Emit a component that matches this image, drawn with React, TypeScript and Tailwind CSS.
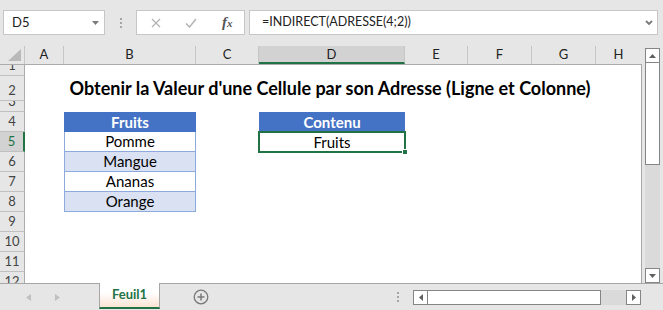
import React from 'react';

const cols = [
  { label: 'A', w: 'w-[39px]' },
  { label: 'B', w: 'w-[132px]' },
  { label: 'C', w: 'w-[63px]' },
  { label: 'D', w: 'w-[146px]', active: true },
  { label: 'E', w: 'w-[63px]' },
  { label: 'F', w: 'w-[64px]' },
  { label: 'G', w: 'w-[64px]' },
  { label: 'H', w: 'w-[45px]' },
];

const rows = [
  { n: 1, h: 'h-[11px]' },
  { n: 2, h: 'h-[25px]' },
  { n: 3, h: 'h-[11px]' },
  { n: 4, h: 'h-[20px]' },
  { n: 5, h: 'h-[20px]' },
  { n: 6, h: 'h-[20px]' },
  { n: 7, h: 'h-[20px]' },
  { n: 8, h: 'h-[20px]' },
  { n: 9, h: 'h-[20px]' },
  { n: 10, h: 'h-[20px]' },
  { n: 11, h: 'h-[20px]' },
  { n: 12, h: 'h-[20px]' },
];

const fruits = ['Pomme', 'Mangue', 'Ananas', 'Orange'];

function TriDown({ className = '' }: { className?: string }) {
  return (
    <svg width="7" height="4" viewBox="0 0 7 4" className={className}>
      <path d="M0 0h7L3.5 4z" fill="#7a7a7a" />
    </svg>
  );
}

function FormulaBar() {
  return (
    <div className="h-[46px] flex items-start pt-[10px] pl-[3px] shrink-0">
      <div className="w-[102px] h-[25px] bg-white border border-[#c6c6c6] flex items-center justify-between pl-[8px] pr-[5px]">
        <span className="text-[13px] text-[#222]">D5</span>
        <TriDown />
      </div>
      <div className="w-[31px] h-[25px] flex flex-col items-center justify-center gap-[2px]">
        <span className="w-[2px] h-[2px] bg-[#a6a6a6]" />
        <span className="w-[2px] h-[2px] bg-[#a6a6a6]" />
        <span className="w-[2px] h-[2px] bg-[#a6a6a6]" />
      </div>
      <div className="w-[109px] h-[25px] bg-white border border-[#c6c6c6] flex items-center">
        <svg width="10" height="10" viewBox="0 0 10 10" className="ml-[14px]">
          <path d="M1 1l8 8M9 1l-8 8" stroke="#b4b4b4" strokeWidth="1.3" />
        </svg>
        <svg width="12" height="10" viewBox="0 0 12 10" className="ml-[24px]">
          <path d="M1 5.5l3.5 3.5L11 1" stroke="#b4b4b4" strokeWidth="1.5" fill="none" />
        </svg>
        <span className="ml-[25px] font-['Liberation_Serif',serif] italic font-bold text-[15px] text-[#555] leading-none">
          f<span className="text-[11px]">x</span>
        </span>
      </div>
      <div className="ml-[4px] w-[409px] h-[25px] bg-white border border-[#c6c6c6] flex items-center justify-between pl-[12px] pr-[4px]">
        <span className="text-[12.5px] text-[#222]">=INDIRECT(ADRESSE(4;2))</span>
        <svg width="8" height="6" viewBox="0 0 8 6">
          <path d="M1 1l3 3 3-3" stroke="#7a7a7a" strokeWidth="1.8" fill="none" />
        </svg>
      </div>
    </div>
  );
}

function RowContent({ n }: { n: number }) {
  if (n === 2) {
    return (
      <div className="ml-[39px] w-[532px] h-full flex items-end justify-center pb-[4px]">
        <span className="font-bold text-[18px] leading-none text-black whitespace-nowrap">
          Obtenir la Valeur d'une Cellule par son Adresse (Ligne et Colonne)
        </span>
      </div>
    );
  }
  if (n === 4) {
    return (
      <div className="flex h-full">
        <div className="ml-[39px] w-[132px] h-full bg-[#4472c4] text-white font-bold flex items-center justify-center text-[15px]">Fruits</div>
        <div className="ml-[63px] w-[146px] h-full bg-[#4472c4] text-white font-bold flex items-center justify-center text-[15px]">Contenu</div>
      </div>
    );
  }
  if (n >= 5 && n <= 8) {
    const banded = n % 2 === 0;
    return (
      <div className="flex h-full">
        <div className={`ml-[39px] w-[132px] h-full border-x border-b border-[#8ea9db] flex items-center justify-center text-[15px] text-black ${banded ? 'bg-[#d9e1f2]' : 'bg-white'}`}>
          {fruits[n - 5]}
        </div>
        {n === 5 && (
          <div className="ml-[62px] w-[148px] h-[22px] -mt-px relative border-2 border-[#217346] flex items-center justify-center text-[15px] text-black">
            Fruits
            <span className="absolute -right-[4px] -bottom-[4px] w-[6px] h-[6px] bg-[#217346] border border-white" />
          </div>
        )}
      </div>
    );
  }
  return null;
}

function VScroll() {
  return (
    <div className="w-[15px] ml-[3px] pt-[2px] flex flex-col">
      <div className="h-[15px] bg-white border border-[#858585] flex items-center justify-center">
        <svg width="7" height="4" viewBox="0 0 7 4"><path d="M0 4h7L3.5 0z" fill="#606060" /></svg>
      </div>
      <div className="h-[102px] bg-white border-x border-b border-[#858585]" />
      <div className="flex-1 bg-[#dadada]" />
      <div className="h-[15px] bg-white border border-[#858585] flex items-center justify-center">
        <svg width="7" height="4" viewBox="0 0 7 4"><path d="M0 0h7L3.5 4z" fill="#606060" /></svg>
      </div>
    </div>
  );
}

function Grid() {
  return (
    <div className="w-[642px] flex flex-col">
      <div className="h-[19px] flex shrink-0 border-b border-[#ababab]">
        <div className="w-[25px] h-full border-r border-[#c6c6c6] flex items-end justify-end pr-[3px] pb-[3px]">
          <svg width="13" height="12" viewBox="0 0 13 12"><path d="M13 0v12H0z" fill="#b9b9b9" /></svg>
        </div>
        {cols.map((c) => (
          <div
            key={c.label}
            className={`${c.w} h-full flex items-center justify-center text-[13px] ${c.label === 'H' ? '' : 'border-r border-[#c6c6c6]'} ${c.active ? 'bg-[#d2d2d2] border-b-2 border-b-[#217346] -mb-px text-[#1d1d1d]' : 'text-[#222]'}`}
          >
            <span className={c.active ? 'pt-[1px]' : ''}>{c.label}</span>
          </div>
        ))}
      </div>
      <div className="flex-1 overflow-hidden border-r border-[#a6a6a6] bg-white">
        {rows.map((r) => (
          <div key={r.n} className={`${r.h} flex`}>
            <div
              className={`w-[25px] shrink-0 h-full border-b border-[#c0c0c0] flex items-end justify-center overflow-hidden pb-[2px] text-[13px] leading-[15px] ${r.n === 5 ? 'bg-[#d2d2d2] border-r-2 border-r-[#217346] text-[#217346]' : 'bg-[#e6e6e6] border-r border-r-[#ababab] text-[#444]'}`}
            >
              {r.n}
            </div>
            <div className="flex-1 h-full">
              <RowContent n={r.n} />
            </div>
          </div>
        ))}
      </div>
    </div>
  );
}

function SheetTabs() {
  return (
    <div className="h-[27px] shrink-0 flex items-start border-t border-[#a6a6a6]">
      <div className="w-[99px] h-[26px] flex items-center">
        <svg width="5" height="7" viewBox="0 0 5 7" className="ml-[26px]"><path d="M5 0v7L0 3.5z" fill="#c0c0c0" /></svg>
        <svg width="5" height="7" viewBox="0 0 5 7" className="ml-[24px]"><path d="M0 0v7l5-3.5z" fill="#c0c0c0" /></svg>
      </div>
      <div className="w-[61px] h-[26px] -mt-px bg-gradient-to-b from-white from-40% to-[#fbe3d3] border-x border-[#a6a6a6] border-b-2 border-b-[#217346] flex items-center justify-center">
        <span className="font-bold text-[13px] text-[#217346]">Feuil1</span>
      </div>
      <div className="h-[26px] flex items-center ml-[33px]">
        <svg width="16" height="16" viewBox="0 0 16 16">
          <circle cx="8" cy="8" r="6.8" fill="none" stroke="#7a7a7a" strokeWidth="1.3" />
          <path d="M8 4.5v7M4.5 8h7" stroke="#7a7a7a" strokeWidth="1.5" />
        </svg>
      </div>
      <div className="h-[26px] flex flex-col justify-center gap-[2px] ml-[188px]">
        <span className="w-[2px] h-[2px] bg-[#a6a6a6]" />
        <span className="w-[2px] h-[2px] bg-[#a6a6a6]" />
        <span className="w-[2px] h-[2px] bg-[#a6a6a6]" />
      </div>
      <div className="ml-[14px] mt-[6px] w-[228px] h-[15px] flex">
        <div className="w-[15px] h-full bg-white border border-[#858585] flex items-center justify-center">
          <svg width="4" height="7" viewBox="0 0 4 7"><path d="M4 0v7L0 3.5z" fill="#606060" /></svg>
        </div>
        <div className="flex-1 h-full bg-white border-y border-r border-[#858585]" />
        <div className="w-[25px] h-full bg-[#dadada]" />
        <div className="w-[15px] h-full bg-white border border-[#858585] flex items-center justify-center">
          <svg width="4" height="7" viewBox="0 0 4 7"><path d="M0 0v7l4-3.5z" fill="#606060" /></svg>
        </div>
      </div>
    </div>
  );
}

export default function App() {
  return (
    <div className="w-[663px] h-[310px] bg-[#e6e6e6] flex flex-col overflow-hidden font-[Lato,'Liberation_Sans',sans-serif]">
      <FormulaBar />
      <div className="h-[237px] flex shrink-0">
        <Grid />
        <VScroll />
      </div>
      <SheetTabs />
    </div>
  );
}
